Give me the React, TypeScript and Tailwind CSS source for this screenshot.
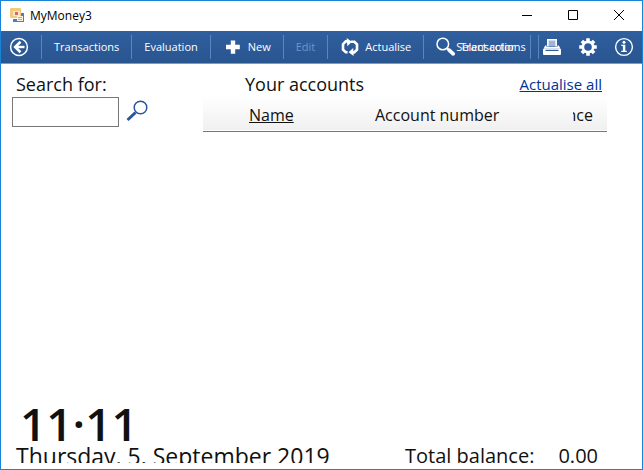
import { useState, type ReactNode } from 'react';

function ToolButton({ children, disabled }: { children: ReactNode; disabled?: boolean }) {
  return (
    <button
      type="button"
      disabled={disabled}
      className="flex h-6 shrink-0 items-center gap-[5px] whitespace-nowrap border-l border-[#5a86c0] px-3 text-[11px] text-white disabled:text-[#6f95cb]"
    >
      {children}
    </button>
  );
}

function AppIcon() {
  return (
    <svg className="h-4 w-4" viewBox="0 0 16 16">
      <rect x="1" y="0" width="11" height="10" rx="1" fill="#f0cb7d" />
      <rect x="4" y="3" width="7" height="5" fill="#f8e3d0" />
      <rect x="6" y="4" width="3" height="3" fill="#d9666d" />
      <path d="M12 5h3v9H4v-3h8z" fill="#4f7fb5" />
      <rect x="8" y="8" width="6" height="5" fill="#fbf1df" />
      <path d="M9 9.5h4M9 11.5h4" stroke="#e0a86a" />
    </svg>
  );
}

function BackIcon() {
  return (
    <svg className="h-5 w-5" viewBox="0 0 20 20" fill="none" stroke="#fff">
      <circle cx="10" cy="10" r="8.4" strokeWidth="1.5" />
      <path d="M6 10h9.5" strokeWidth="2.4" />
      <path d="M11.5 4.8L6.2 10l5.3 5.2" strokeWidth="2.6" />
    </svg>
  );
}

function PlusIcon() {
  return (
    <svg className="h-5 w-5" viewBox="0 0 20 20">
      <path d="M7.8 3.5h4.4v4.3h4.6v4.4h-4.6v4.6H7.8v-4.6H3V7.8h4.8z" fill="#fff" />
    </svg>
  );
}

function RefreshIcon() {
  return (
    <svg className="h-5 w-5" viewBox="0 0 20 20" fill="none" stroke="#fff" strokeWidth="2.6">
      <path d="M7.6 15.2H5.8L3 12.6V7.2l2.8-2.8H8" />
      <path d="M11 4.8h3.4L17 7.4v5.2l-2.8 2.8H12" />
      <path d="M6.6 1l5.2 3.8-4.4 4.4z" fill="#fff" stroke="none" />
      <path d="M13.2 11L8.6 15.2l5 3.8z" fill="#fff" stroke="none" />
    </svg>
  );
}

function FindIcon() {
  return (
    <svg className="h-5 w-5" viewBox="0 0 20 20" fill="none" stroke="#fff">
      <circle cx="6.8" cy="7" r="5.8" strokeWidth="1.5" />
      <path d="M11 11.2l2.2 2" strokeWidth="2" />
      <path d="M13.2 13.2l4 3.6" strokeWidth="3.8" strokeLinecap="round" />
    </svg>
  );
}

function PrintIcon() {
  return (
    <svg className="h-5 w-5" viewBox="0 0 20 20">
      <path d="M5.8 9.5V2.8h8.4v6.7" fill="#9fb5d6" stroke="#fff" strokeWidth="1.6" />
      <path d="M3.2 8.5h1.4v1.6h10.8V8.5h1.4l1.7 3.2h-17z" fill="#fff" />
      <rect x="1" y="11.7" width="18" height="6.3" rx="1" fill="#fff" />
      <path d="M3.5 13.4h13" stroke="#2c5a9b" strokeWidth="1.2" />
    </svg>
  );
}

function GearIcon() {
  return (
    <svg className="h-5 w-5" viewBox="0 0 20 20">
      <g stroke="#fff" strokeWidth="3.6">
        <path d="M10 1.2v17.6M1.2 10h17.6M3.9 3.9l12.2 12.2M16.1 3.9L3.9 16.1" />
      </g>
      <circle cx="10" cy="10" r="6.5" fill="#fff" />
      <circle cx="10" cy="10" r="3.8" fill="#2c5a9b" />
    </svg>
  );
}

function InfoIcon() {
  return (
    <svg className="h-5 w-5" viewBox="0 0 20 20">
      <circle cx="10" cy="10" r="8.4" fill="none" stroke="#fff" strokeWidth="1.4" />
      <circle cx="10" cy="5.2" r="1.5" fill="#fff" />
      <path d="M7.3 7.8h4v6h1.5V15H7.2v-1.2h1.7V9.1H7.3z" fill="#fff" />
    </svg>
  );
}

export default function App() {
  const [search, setSearch] = useState('');

  return (
    <div className="flex h-screen flex-col overflow-hidden border border-[#1883d7] bg-white pb-1.5 font-['Open_Sans','Noto_Sans',sans-serif] text-[#111]">
      {/* title bar */}
      <header className="flex h-[30px] shrink-0 items-center pl-2">
        <AppIcon />
        <h1 className="ml-[5px] flex-1 text-xs text-black">MyMoney3</h1>
        <button type="button" aria-label="Minimize" className="flex h-full w-[46px] items-center justify-center">
          <svg className="h-3 w-3" viewBox="0 0 12 12" stroke="#000"><path d="M1 5.5h10" /></svg>
        </button>
        <button type="button" aria-label="Maximize" className="flex h-full w-[46px] items-center justify-center">
          <svg className="h-3 w-3" viewBox="0 0 12 12" fill="none" stroke="#000"><path d="M1.5 .5h9v9h-9z" /></svg>
        </button>
        <button type="button" aria-label="Close" className="flex h-full w-[46px] items-center justify-center">
          <svg className="h-3 w-3" viewBox="0 0 12 12" stroke="#000"><path d="M1 0l10 10M11 0L1 10" /></svg>
        </button>
      </header>

      {/* toolbar */}
      <nav className="flex h-[33px] shrink-0 items-center border-b border-[#8d97a8] bg-linear-to-b from-[#305f9f] to-[#29558f]">
        <button type="button" aria-label="Back" className="flex w-10 shrink-0 items-center pl-2">
          <BackIcon />
        </button>
        <ToolButton>Transactions</ToolButton>
        <ToolButton>Evaluation</ToolButton>
        <ToolButton><PlusIcon />New</ToolButton>
        <ToolButton disabled>Edit</ToolButton>
        <ToolButton><RefreshIcon />Actualise</ToolButton>
        <div className="relative flex h-6 w-[107px] shrink-0 items-center border-l border-[#5a86c0] pl-3 text-[11px] text-white">
          <FindIcon />
          <button type="button" className="absolute left-9 whitespace-nowrap">Transactions</button>
          <button type="button" className="absolute left-8 whitespace-nowrap">Select color</button>
        </div>
        <div className="flex h-6 flex-1 items-center border-l border-[#5a86c0] pl-[7px]">
          <div className="flex h-6 flex-1 items-center justify-between border-l border-[#5a86c0] pr-2 pl-[3px]">
            <button type="button" aria-label="Print"><PrintIcon /></button>
            <button type="button" aria-label="Settings"><GearIcon /></button>
            <button type="button" aria-label="Info"><InfoIcon /></button>
          </div>
        </div>
      </nav>

      <main className="flex min-h-0 flex-1 pt-2 pr-[35px]">
        <form className="w-[202px] shrink-0 pl-[11px]" onSubmit={(e) => e.preventDefault()}>
          <label htmlFor="search" className="block pl-1 text-lg leading-[25px]">Search for:</label>
          <div className="flex items-center gap-[7px]">
            <input
              id="search"
              type="text"
              value={search}
              onChange={(e) => setSearch(e.target.value)}
              className="h-[30px] w-[107px] border border-[#777] px-1 outline-none"
            />
            <button type="submit" aria-label="Search">
              <svg className="h-6 w-6" viewBox="0 0 24 24" fill="none" stroke="#2a5699">
                <circle cx="14.5" cy="7.5" r="6.3" strokeWidth="1.5" />
                <path d="M9.5 12.5L1.5 20" strokeWidth="3" />
              </svg>
            </button>
          </div>
        </form>

        <section className="min-w-0 flex-1">
          <div className="flex items-center justify-between pr-[5px] pl-[42px]">
            <h2 className="text-lg leading-6">Your accounts</h2>
            <a href="#" className="text-[15px] leading-6 text-[#003399] underline">Actualise all</a>
          </div>
          <table className="w-full table-fixed border-collapse">
            <thead>
              <tr className="h-[35px] border-b border-[#777] bg-linear-to-b from-white to-[#f0f0f0] text-left text-base">
                <th className="w-[172px] pt-1 pl-[46px] font-normal"><a href="#" className="underline">Name</a></th>
                <th className="pt-1 font-normal">Account number</th>
                <th className="w-[34px] pt-1 pr-3 font-normal">
                  <span className="flex w-5 justify-end overflow-hidden">Balance</span>
                </th>
              </tr>
            </thead>
          </table>
        </section>
      </main>

      {/* clock, date and total, cut off by the window's bottom edge */}
      <footer className="flex h-[62px] shrink-0 items-start justify-between overflow-hidden pr-11 pl-[15px]">
        <div>
          <div className="pl-1 text-[46px] leading-[44px] font-semibold">11·11</div>
          <div className="text-[23px] leading-[22px]">Thursday, 5. September 2019</div>
        </div>
        <dl className="flex gap-6 pt-11 text-xl leading-[22px]">
          <dt>Total balance:</dt>
          <dd>0.00</dd>
        </dl>
      </footer>
    </div>
  );
}
